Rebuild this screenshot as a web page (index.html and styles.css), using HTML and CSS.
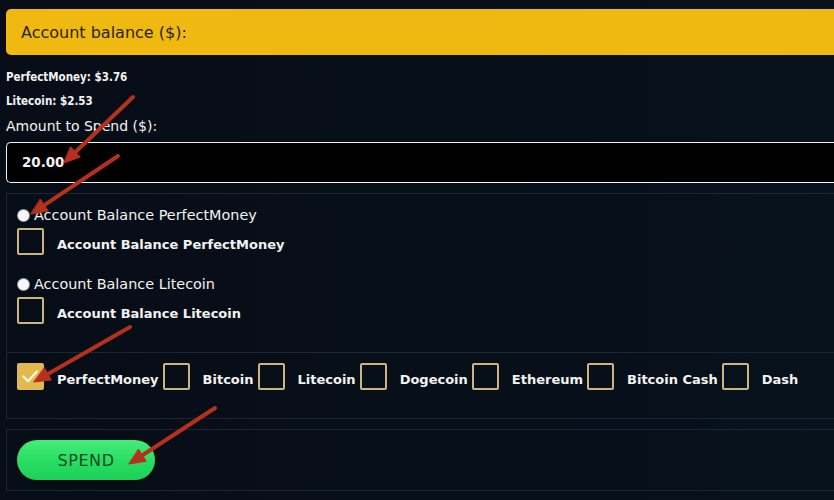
FILE: index.html
```html
<!DOCTYPE html>
<html lang="en">
<head>
<meta charset="utf-8">
<title>Spend</title>
<link rel="stylesheet" href="styles.css">
</head>
<body>
<div class="page">
  <div class="balance-head">Account balance ($):</div>
  <div class="balances">
    <div class="bal-line">PerfectMoney: $3.76</div>
    <div class="bal-line">Litecoin: $2.53</div>
  </div>
  <div class="amount-label">Amount to Spend ($):</div>
  <div class="amount-input">20.00</div>

  <div class="options">
    <div class="opt-section">
      <div class="radio-row"><span class="radio"></span><span>Account Balance PerfectMoney</span></div>
      <div class="check-row"><span class="box"></span><span class="check-label">Account Balance PerfectMoney</span></div>
      <div class="radio-row second"><span class="radio"></span><span>Account Balance Litecoin</span></div>
      <div class="check-row"><span class="box"></span><span class="check-label">Account Balance Litecoin</span></div>
    </div>
    <div class="coin-row">
      <div class="coin"><span class="box checked"><svg viewBox="0 0 27 27" width="23" height="23"><path d="M5 13.5 L10.5 19 L21 7.5" fill="none" stroke="#fbf6e6" stroke-width="2.6" stroke-linecap="round" stroke-linejoin="round"/></svg></span><span class="coin-label">PerfectMoney</span></div>
      <div class="coin"><span class="box"></span><span class="coin-label">Bitcoin</span></div>
      <div class="coin"><span class="box"></span><span class="coin-label">Litecoin</span></div>
      <div class="coin"><span class="box"></span><span class="coin-label">Dogecoin</span></div>
      <div class="coin"><span class="box"></span><span class="coin-label">Ethereum</span></div>
      <div class="coin"><span class="box"></span><span class="coin-label">Bitcoin Cash</span></div>
      <div class="coin"><span class="box"></span><span class="coin-label">Dash</span></div>
    </div>
  </div>

  <div class="action-box">
    <button class="spend-btn">SPEND</button>
  </div>
</div>

<svg class="arrows" width="834" height="500" viewBox="0 0 834 500">
  <g fill="#b5301d" stroke="#b5301d" stroke-linecap="round">
    <line x1="133" y1="97" x2="75.5" y2="152" stroke-width="4"/>
    <polygon points="64,163 80.4,157 70.7,146.9" stroke-width="1"/>
    <line x1="118" y1="156" x2="44.3" y2="205.1" stroke-width="4"/>
    <polygon points="31,214 48.2,210.9 40.4,199.3" stroke-width="1"/>
    <line x1="130" y1="327" x2="47.9" y2="374" stroke-width="4"/>
    <polygon points="34,382 51.4,380.1 44.4,367.9" stroke-width="1"/>
    <line x1="215" y1="408" x2="142.4" y2="455.3" stroke-width="4"/>
    <polygon points="129,464 146.2,461.2 138.6,449.4" stroke-width="1"/>
  </g>
</svg>
</body>
</html>
```

FILE: styles.css
```css
html, body {
  margin: 0;
  padding: 0;
}
body {
  background: #070d16;
  background-image: linear-gradient(90deg, #070d16 0%, #07101a 70%, #08121c 100%);
  width: 834px;
  height: 500px;
  overflow: hidden;
  font-family: "DejaVu Sans", "Liberation Sans", sans-serif;
  color: #f3f3f3;
}
.page {
  width: 828px;
  padding: 9px 0 0 6px;
}
.balance-head {
  height: 46px;
  background: #f0b912;
  border-radius: 5px 0 0 5px;
  color: #2a2416;
  font-size: 16px;
  display: flex;
  align-items: center;
  padding-left: 15px;
}
.balances {
  margin-top: 10px;
}
.bal-line {
  font-family: "DejaVu Sans Condensed", "DejaVu Sans", sans-serif;
  font-weight: bold;
  font-size: 11.5px;
  line-height: 24px;
}
.amount-label {
  margin-top: 4px;
  font-size: 14px;
  line-height: 18px;
}
.amount-input {
  margin-top: 7px;
  height: 39px;
  border: 1px solid #f2f2f2;
  border-right: none;
  border-radius: 5px 0 0 5px;
  background: #000;
  display: flex;
  align-items: center;
  padding-left: 15px;
  font-weight: bold;
  font-size: 13.4px;
}
.options {
  margin-top: 10px;
  border: 1px solid #1a2631;
  border-right: none;
}
.opt-section {
  padding: 12px 10px 28px 10px;
}
.radio-row {
  height: 18px;
  display: flex;
  align-items: center;
  font-size: 14.4px;
}
.radio-row.second {
  margin-top: 20px;
}
.radio {
  width: 11px;
  height: 11px;
  border-radius: 50%;
  background: #f7f7f7;
  box-shadow: 0 0 0 1px #9aa0a6;
  margin: 0 5px 0 1px;
}
.check-row {
  margin-top: 4px;
  display: flex;
  align-items: center;
}
.box {
  width: 23px;
  height: 23px;
  border: 2px solid #cbb47f;
  border-radius: 2px;
  flex: none;
  display: flex;
  align-items: center;
  justify-content: center;
}
.box.checked {
  background: #e0b94f;
  border-color: #e0b94f;
}
.check-label, .coin-label {
  font-weight: bold;
  font-size: 13px;
  margin-left: 13px;
  padding-top: 5px;
}
.coin-row {
  border-top: 1px solid #1a2631;
  padding: 10px 10px 28px 10px;
  display: flex;
  align-items: center;
}
.coin {
  display: flex;
  align-items: center;
  margin-right: 4px;
}
.action-box {
  margin-top: 10px;
  border: 1px solid #1a2631;
  border-right: none;
  padding: 10px 10px 10px 10px;
}
.spend-btn {
  display: block;
  width: 138px;
  height: 40px;
  border: none;
  border-radius: 20px;
  background: linear-gradient(180deg, #45ec77 0%, #2ade64 50%, #1ccf56 100%);
  color: #0f4a24;
  font-family: "DejaVu Sans", sans-serif;
  font-size: 16px;
  letter-spacing: 0.6px;
  padding: 0;
}
.arrows {
  position: absolute;
  left: 0;
  top: 0;
  pointer-events: none;
}
```
